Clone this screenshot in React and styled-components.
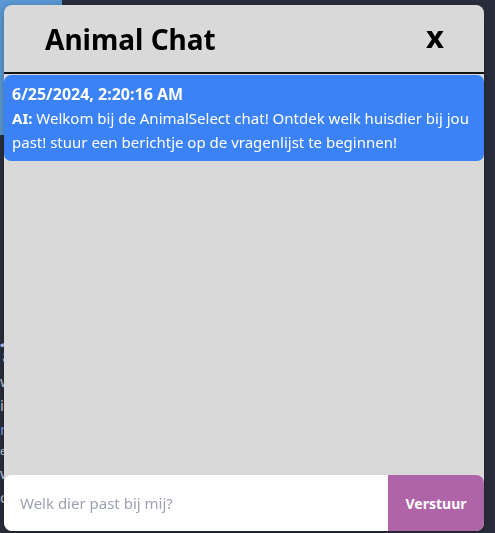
import React, { useState } from "react";
import styled, { createGlobalStyle } from "styled-components";

const GlobalStyle = createGlobalStyle`
  html, body {
    margin: 0;
    padding: 0;
    background: #2a2e3c;
    font-family: "Noto Sans", "Open Sans", sans-serif;
    overflow: hidden;
  }
`;

// Page behind the chat widget
const Page = styled.div`
  width: 495px;
  height: 533px;
  display: flex;
  flex-direction: column;
`;

const BlueTile = styled.div`
  width: 62px;
  height: 135px;
  background: #5b9ad6;
`;

const PageText = styled.div`
  margin-top: 200px;
  padding-left: 0;
  color: #c8cbd6;
  font-size: 15px;
  line-height: 24px;
  width: 40px;
`;

const PageHeading = styled.div`
  font-size: 26px;
  font-weight: 700;
  color: #b9c4e8;
  line-height: 34px;
`;

const PageLink = styled.div`
  color: #7f9de6;
`;

const PageSmall = styled.div`
  font-size: 10px;
  line-height: 20px;
`;

// Chat widget
const ChatWindow = styled.div`
  position: fixed;
  top: 5px;
  left: 4px;
  width: 480px;
  height: 526px;
  background: #d9d9d9;
  border-radius: 8px;
  display: flex;
  flex-direction: column;
  overflow: hidden;
  box-shadow: 0 2px 10px rgba(0, 0, 0, 0.3);
`;

const Header = styled.div`
  height: 67px;
  display: flex;
  align-items: center;
  justify-content: space-between;
  padding: 0 40px 0 41px;
  border-bottom: 2px solid #111;
`;

const Title = styled.h2`
  margin: 0;
  font-size: 28px;
  font-weight: 700;
  color: #000;
`;

const CloseButton = styled.button`
  background: none;
  border: none;
  padding: 0 0 4px;
  font-family: inherit;
  font-size: 31px;
  line-height: 1;
  font-weight: 700;
  color: #000;
  cursor: pointer;
`;

const Messages = styled.div`
  flex: 1;
  padding-top: 1px;
  display: flex;
  flex-direction: column;
  gap: 8px;
`;

const Bubble = styled.div`
  background: ${(p) => (p.$fromUser ? "#b064a8" : "#3b82f6")};
  color: #fff;
  border-radius: 7px;
  padding: 7px 8px;
  font-size: 15px;
  line-height: 24px;
`;

const Stamp = styled.div`
  font-size: 16px;
  font-weight: 700;
`;

const Sender = styled.span`
  font-weight: 700;
`;

const Form = styled.form`
  display: flex;
  height: 56px;
  border-radius: 8px;
  overflow: hidden;
`;

const Input = styled.input`
  flex: 1;
  border: none;
  outline: none;
  padding: 0 16px;
  font-family: inherit;
  font-size: 15px;
  color: #222;
  background: #fff;

  &::placeholder {
    color: #9ca3af;
  }
`;

const SendButton = styled.button`
  width: 96px;
  border: none;
  background: #b064a8;
  color: #fff;
  font-family: inherit;
  font-size: 14px;
  font-weight: 700;
  cursor: pointer;
`;

const messages = [
  {
    time: "6/25/2024, 2:20:16 AM",
    sender: "AI",
    text:
      "Welkom bij de AnimalSelect chat! Ontdek welk huisdier bij jou past! stuur een berichtje op de vragenlijst te beginnen!",
  },
];

export default function App() {
  const [value, setValue] = useState("");

  return (
    <>
      <GlobalStyle />
      <Page>
        <BlueTile />
        <PageText>
          <PageHeading>?</PageHeading>
          <div>w</div>
          <div>i</div>
          <PageLink>n</PageLink>
          <PageSmall>es</PageSmall>
          <div>w</div>
          <div>o</div>
        </PageText>
      </Page>

      <ChatWindow>
        <Header>
          <Title>Animal Chat</Title>
          <CloseButton>x</CloseButton>
        </Header>
        <Messages>
          {messages.map((m, i) => (
            <Bubble key={i} $fromUser={m.sender !== "AI"}>
              <Stamp>{m.time}</Stamp>
              <div>
                <Sender>{m.sender}: </Sender>
                {m.text}
              </div>
            </Bubble>
          ))}
        </Messages>
        <Form onSubmit={(e) => e.preventDefault()}>
          <Input
            placeholder="Welk dier past bij mij?"
            value={value}
            onChange={(e) => setValue(e.target.value)}
          />
          <SendButton type="submit">Verstuur</SendButton>
        </Form>
      </ChatWindow>
    </>
  );
}
